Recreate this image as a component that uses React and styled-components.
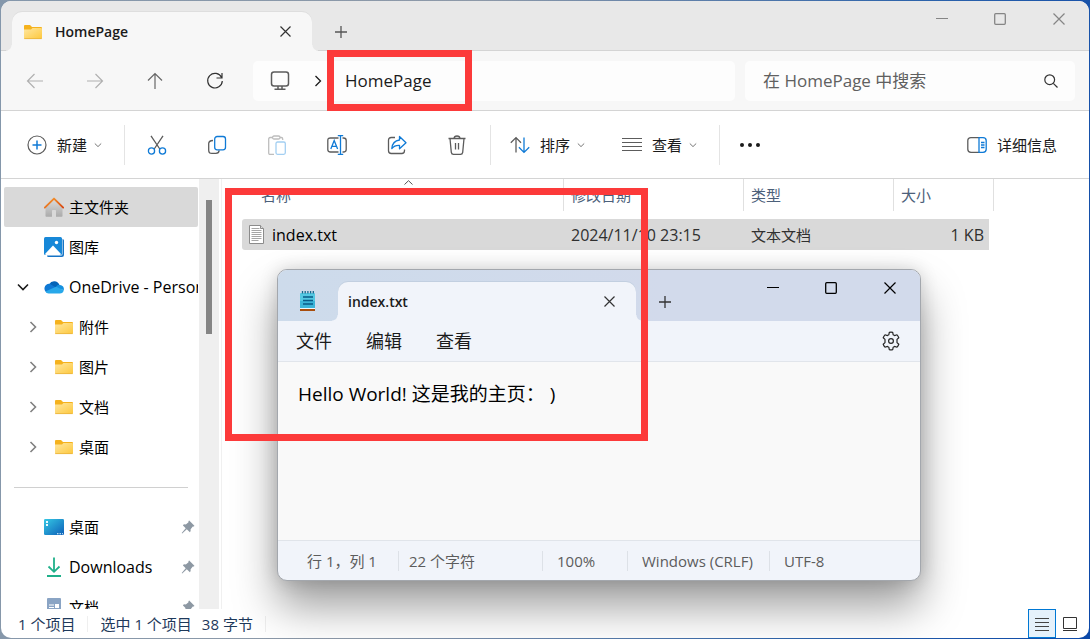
import React from "react";
import styled, { createGlobalStyle } from "styled-components";

const GlobalStyle = createGlobalStyle`
  *, *::before, *::after { box-sizing: border-box; }
  body { margin: 0; }
  body, button, input, textarea, table {
    font-family: "Open Sans", "Noto Sans CJK SC", sans-serif;
    font-size: 15px;
    line-height: 20px;
    color: #1b1b1b;
  }
  button { border: 0; padding: 0; background: none; }
  svg { display: block; flex: none; }
`;

const Desktop = styled.div`
  position: relative;
  display: flex;
  min-height: 100vh;
  padding: 1px;
  overflow: hidden;
  background: linear-gradient(100deg, #8497ab 0%, #8d99a8 40%, #2f65ab 75%, #0b48a8 100%);
`;

const Explorer = styled.main`
  flex: 1;
  min-width: 0;
  display: flex;
  flex-direction: column;
  border-radius: 10px;
  overflow: hidden;
  background: #fff;
`;

/* ---------- title bar ---------- */

const TitleBar = styled.header`
  display: flex;
  height: 50px;
  flex: none;
  background: #e8e8e8;
  box-shadow: inset 0 -1px #d4d4d4;
`;

const Tab = styled.div`
  position: relative;
  display: flex;
  align-items: center;
  align-self: flex-end;
  gap: 12px;
  width: ${(p) => p.$width}px;
  height: 39px;
  margin-left: ${(p) => p.$indent}px;
  padding: 0 12px 0 ${(p) => p.$start}px;
  border-radius: 10px 10px 0 0;
  background: ${(p) => p.$bg};
  box-shadow: 0 -1px ${(p) => p.$edge};

  &::before, &::after {
    content: "";
    position: absolute;
    bottom: 0;
    width: 6px;
    height: 6px;
  }
  &::before {
    left: -6px;
    background: radial-gradient(circle at 0 0, transparent 5px, ${(p) => p.$bg} 6px);
  }
  &::after {
    right: -6px;
    background: radial-gradient(circle at 100% 0, transparent 5px, ${(p) => p.$bg} 6px);
  }
`;

const TabTitle = styled.span`
  flex: 1;
  white-space: nowrap;
  font-size: 14px;
  font-weight: 600;
`;

const IconButton = styled.button`
  display: flex;
  flex: none;
  align-items: center;
  justify-content: center;
  width: ${(p) => p.$w || 30}px;
  height: ${(p) => p.$h || 30}px;
  color: ${(p) => p.$color || "#333"};
`;

const NewTab = styled(IconButton)`
  align-self: flex-end;
  margin: 0 0 4px 14px;
`;

const Captions = styled.div`
  display: flex;
  margin-left: auto;
`;

/* ---------- navigation row ---------- */

const NavBar = styled.nav`
  display: flex;
  align-items: center;
  flex: none;
  height: 60px;
  padding: 0 14px 0 19px;
  border-bottom: 1px solid #d4d4d4;
  background: #f7f7f7;
`;

const NavButtons = styled.div`
  display: flex;
  gap: 30px;
  margin-right: 23px;
`;

const AddressBar = styled.div`
  display: flex;
  align-items: center;
  flex: 1;
  min-width: 0;
  height: 40px;
  padding-left: 12px;
  border-radius: 5px;
  background: #fdfdfd;
`;

const Crumb = styled.button`
  margin-left: 4px;
  font-size: 17px;
  line-height: 24px;
`;

const SearchBox = styled.label`
  display: flex;
  align-items: center;
  flex: none;
  width: 330px;
  height: 40px;
  margin-left: 10px;
  padding: 0 17px 0 18px;
  border-radius: 5px;
  background: #fdfdfd;
`;

const SearchInput = styled.input`
  flex: 1;
  min-width: 0;
  padding: 0;
  border: 0;
  outline: 0;
  background: transparent;
  font-size: 17px;
  line-height: 24px;
  &::placeholder { color: #606060; opacity: 1; }
`;

/* ---------- command bar ---------- */

const CommandBar = styled.div`
  display: flex;
  align-items: center;
  flex: none;
  height: 68px;
  padding: 0 32px 0 26px;
  border-bottom: 1px solid #d4d4d4;
`;

const Command = styled.button`
  display: flex;
  align-items: center;
  white-space: nowrap;
`;

const CommandLabel = styled.span`
  margin-left: 10px;
  svg + & { margin-left: 10px; }
  & + svg { margin-left: 7px; }
`;

const Rule = styled.span`
  flex: none;
  width: 1px;
  height: ${(p) => p.$h}px;
  background: ${(p) => p.$tone || "#e4e4e4"};
`;

const CommandRule = styled(Rule)`
  margin-left: 22px;
`;

const Tools = styled.div`
  display: flex;
  gap: 38px;
  margin-left: 21px;
`;

const ViewCommands = styled.div`
  display: flex;
  gap: 37px;
  margin-left: 19px;
`;

const Details = styled(Command)`
  margin-left: auto;
`;

/* ---------- body ---------- */

const Body = styled.div`
  display: flex;
  flex: 1 1 0;
  min-height: 430px;
`;

const Sidebar = styled.aside`
  flex: none;
  width: 198px;
  height: 430px;
  padding: 8px 1px 0 3px;
  overflow: hidden;
`;

const Place = styled.button`
  display: flex;
  align-items: center;
  width: 100%;
  height: 40px;
  padding-left: ${(p) => (p.$nested ? 20 : 10)}px;
  padding-right: 3px;
  overflow: hidden;
  border-radius: 2px;
  background: ${(p) => (p.$active ? "#d9d9d9" : "transparent")};
  color: #000;
  text-align: left;
`;

const Toggle = styled.span`
  display: flex;
  justify-content: center;
  flex: none;
  width: 18px;
  margin-right: 12px;
`;

const PlaceIcon = styled.span`
  display: flex;
  justify-content: center;
  flex: none;
  width: 20px;
`;

const PlaceName = styled.span`
  flex: 1;
  margin-left: 5px;
  white-space: nowrap;
  font-size: ${(p) => (p.$latin ? 16 : 15)}px;
`;

const Divider = styled.hr`
  height: 1px;
  margin: 20px 10px 19px;
  border: 0;
  background: #d0d0d0;
`;

const ScrollTrack = styled.div`
  flex: none;
  width: 20px;
  padding: 21px 7px 0 7px;
  background: #efefef;
`;

const ScrollThumb = styled.div`
  height: 134px;
  background: #858585;
`;

const Files = styled.section`
  flex: 1;
  min-width: 0;
  margin-left: 2px;
  padding-left: 20px;
  border-left: 1px solid #f0f0f0;
`;

const FileTable = styled.table`
  width: 752px;
  table-layout: fixed;
  border-spacing: 0;
  tbody::before { content: ""; display: block; height: 8px; }
`;

const Head = styled.th`
  position: relative;
  width: ${(p) => p.$w}px;
  height: 32px;
  padding: 0 0 0 ${(p) => p.$pad || 7}px;
  border-right: 1px solid #e0e0e0;
  color: #4c607a;
  font-weight: 400;
  text-align: left;
`;

const SortMark = styled.span`
  position: absolute;
  top: 1px;
  left: 162px;
`;

const Cell = styled.td`
  height: 31px;
  padding: 0 5px 0 7px;
  background: #d9d9d9;
  background-clip: padding-box;
  color: #303030;
  white-space: nowrap;
  font-size: ${(p) => (p.$latin ? 16 : 15)}px;
  text-align: ${(p) => p.$align || "left"};
  &:first-child { border-radius: 3px 0 0 3px; }
  &:last-child { border-right: 5px solid transparent; }
`;

const FileName = styled.span`
  display: flex;
  align-items: center;
  gap: 8px;
  color: #000;
`;

const StatusBar = styled.footer`
  display: flex;
  align-items: center;
  flex: none;
  gap: 12px;
  height: 29px;
  padding: 0 6px 0 17px;
  color: #1e395b;
  white-space: nowrap;
`;

const Selection = styled.span`
  display: flex;
  gap: 10px;
`;

const ViewModes = styled.div`
  display: flex;
  gap: 1px;
  margin-left: auto;
`;

const ModeButton = styled(IconButton)`
  border: ${(p) => (p.$on ? "1px solid #0078d4" : "0")};
  background: ${(p) => (p.$on ? "#e5f1fb" : "none")};
`;

/* ---------- notepad window ---------- */

const Notepad = styled.section`
  position: absolute;
  top: 269px;
  left: 277px;
  width: 644px;
  display: flex;
  flex-direction: column;
  border: 1px solid #a3a7ad;
  border-radius: 10px;
  overflow: hidden;
  background: #f1f4fa;
  box-shadow: 0 26px 44px rgba(0, 0, 0, 0.38), 0 0 18px rgba(0, 0, 0, 0.16);
`;

const NotepadTitle = styled.header`
  display: flex;
  height: 51px;
  background: linear-gradient(90deg, #cddbeb, #d2daeb 60%);
`;

const AppIcon = styled.span`
  margin: 20px 0 0 21px;
`;

const MenuBar = styled.div`
  display: flex;
  align-items: center;
  height: 41px;
  padding: 0 14px 0 18px;
  gap: 34px;
  border-bottom: 1px solid #e1e5eb;
`;

const MenuItem = styled.button`
  font-size: 18px;
  line-height: 24px;
`;

const Settings = styled(IconButton)`
  margin-left: auto;
`;

const Editor = styled.textarea`
  display: block;
  height: 178px;
  padding: 20px;
  border: 0;
  outline: 0;
  resize: none;
  background: #f9f9f9;
  color: #000;
  font-size: 19px;
  line-height: 24px;
  text-spacing-trim: space-all;
`;

const NotepadStatus = styled.footer`
  display: grid;
  grid-template-columns: 121px 144px 85px 142px 1fr;
  align-items: center;
  height: 40px;
  border-top: 1px solid #e0e4ea;
  color: #5c5c5c;
  white-space: nowrap;
`;

const StatusCell = styled.span`
  padding-left: ${(p) => p.$pad}px;
  border-right: 1px solid #dde1e7;
  &:last-child { border-right: 0; }
`;

const Highlight = styled.div`
  position: absolute;
  top: ${(p) => p.$top}px;
  left: ${(p) => p.$left}px;
  width: ${(p) => p.$w}px;
  height: ${(p) => p.$h}px;
  border: 7px solid #fc3a3a;
  pointer-events: none;
`;

/* ---------- icons ---------- */

const Line = ({ w = 20, h = w, sw = 1.2, color = "currentColor", children }) => (
  <svg width={w} height={h} viewBox={`0 0 ${w} ${h}`} fill="none" stroke={color} strokeWidth={sw} aria-hidden="true">
    {children}
  </svg>
);

const CloseIcon = ({ s = 12 }) => (
  <Line w={s}><path d={`M.5 .5 ${s - 0.5} ${s - 0.5}M${s - 0.5} .5 .5 ${s - 0.5}`} /></Line>
);
const PlusIcon = () => <Line w={12} sw={1.3}><path d="M6 0v12M0 6h12" /></Line>;
const MinIcon = () => <Line w={12}><path d="M0 5.5h12" /></Line>;
const MaxIcon = () => <Line w={12} sw={1.3}><rect x=".7" y=".7" width="10.6" height="10.6" rx="1" /></Line>;
const Chevron = ({ dir = "right", color = "#808080", sw = 1.6 }) => (
  <Line w={12} color={color} sw={sw}>
    <path d={dir === "right" ? "M3.5 1 8.5 6 3.5 11" : "M1 3.5 6 8.5 11 3.5"} />
  </Line>
);
const SmallDown = () => <Line w={8} color="#777" sw={1}><path d="M.8 2.5 4 5.6 7.2 2.5" /></Line>;

const Folder = () => (
  <svg width="20" height="16" viewBox="0 0 20 16" aria-hidden="true">
    <defs>
      <linearGradient id="folder" x1="0" y1="0" x2="1" y2="1">
        <stop offset="0" stopColor="#ffe7a1" /><stop offset="1" stopColor="#fdc83d" />
      </linearGradient>
    </defs>
    <path d="M1 2q0-1 1-1h5l2 2h9q1 0 1 1v4H1z" fill="#f5b21d" />
    <path d="M1 5.500h7l1.500-1.500H18q1 0 1 1V14q0 .8-1 .8H2q-1 0-1-.8z" fill="url(#folder)" />
    <path d="M1.200 14.600h17.600" stroke="#e8ae2c" strokeWidth=".8" />
  </svg>
);

const HomeIcon = () => (
  <svg width="20" height="20" viewBox="0 0 20 20" aria-hidden="true">
    <defs>
      <linearGradient id="wall" x1="0" y1="0" x2="0" y2="1">
        <stop offset="0" stopColor="#dedede" /><stop offset="1" stopColor="#aaa" />
      </linearGradient>
      <linearGradient id="roof" x1="0" y1="0" x2="1" y2="1">
        <stop offset="0" stopColor="#f8a032" /><stop offset="1" stopColor="#d84a15" />
      </linearGradient>
    </defs>
    <path d="M1.500 9 10 1.500 18.500 9v10q0 .8-.8.8H12v-6q0-.8-.8-.8H8.800q-.8 0-.8.8v6H2.300q-.8 0-.8-.8z" fill="url(#wall)" />
    <path d="M.8 10.600 10 1.600l9.200 9" fill="none" stroke="url(#roof)" strokeWidth="1.900" strokeLinejoin="round" strokeLinecap="round" />
  </svg>
);

const GalleryIcon = () => (
  <svg width="20" height="20" viewBox="0 0 20 20" aria-hidden="true">
    <path d="M3 18.500h14q1.500 0 1.500-1.500V2q1.500 0 1.500 1.500V18q0 2-2 2H4.500Q3 20 3 18.500z" fill="#1674c5" />
    <rect width="18" height="18" rx="1.500" fill="#1788d8" />
    <path d="M1 17 9 8.500l8 8.500q-.4 1-1.500 1h-13Q1.400 18 1 17z" fill="#fff" />
    <circle cx="12.500" cy="5.500" r="1.700" fill="#fff" />
  </svg>
);

const CloudIcon = () => (
  <svg width="20" height="14" viewBox="0 0 20 14" aria-hidden="true">
    <path d="M5.200 4.200A5.600 5.600 0 0 1 15.300 4.800L11 9 3 5z" fill="#0364b8" />
    <path d="M5.800 3.800 13.500 8.500 9 13H4.400A4.500 4.500 0 0 1 5.800 3.800z" fill="#0f78d4" />
    <path d="M12 6.500q1.600-2 4-1.600A4.200 4.200 0 0 1 19.800 10L13 9z" fill="#1490df" />
    <path d="M1.300 11.600 12 6.700l7.800 3.600Q19 13.500 15.800 13.500H4.600Q2.400 13.400 1.300 11.600z" fill="#28a8ea" />
  </svg>
);

const DesktopIcon = () => (
  <svg width="20" height="16" viewBox="0 0 20 16" aria-hidden="true">
    <defs>
      <linearGradient id="desk" x1="0" y1="0" x2="1" y2="1">
        <stop offset="0" stopColor="#35c8e4" /><stop offset="1" stopColor="#0d5fb8" />
      </linearGradient>
    </defs>
    <rect width="20" height="16" rx="1.200" fill="url(#desk)" />
    <path d="M2 2h2v2H2zM2 5h2v2H2zM13 14.300h1.500v1H13zM15.500 14.300H17v1h-1.500zM18 14.300h1v1h-1z" fill="#e9fbff" />
  </svg>
);

const DownloadIcon = () => (
  <Line w={16} h={20} color="#1fb08a" sw={1.8}>
    <path d="M8 .5v14M2.500 9.500 8 14.800l5.500-5.300M1 19h14" />
  </Line>
);

const DocumentIcon = () => (
  <svg width="14" height="18" viewBox="0 0 14 18" aria-hidden="true">
    <rect width="14" height="18" rx="1" fill="#8aa4c4" />
    <path d="M2 6.500h5v1H2zM2 9h5v1H2zM8 6h4v4H8zM2 12h10v1H2z" fill="#fff" />
  </svg>
);

const PinIcon = () => (
  <svg width="14" height="14" viewBox="0 0 14 14" aria-hidden="true">
    <path d="M8.200.6 13.400 5.700Q13.200 6.700 11.800 6.600L9.600 9.300Q10 11.300 8.900 12.300L5.800 9.300 1.200 13.400.7 12.900 4.700 8.200 1.800 5.300Q2.700 4 4.800 4.400L7.500 2.200Q7.200.9 8.200.6z" fill="#8d98a3" />
  </svg>
);

const TextFileIcon = () => (
  <svg width="15" height="19" viewBox="0 0 15 19" aria-hidden="true">
    <path d="M.5.5h11l3 3v15H.5z" fill="#fff" stroke="#8b8b8b" />
    <path d="M11.500.5v3h3" fill="#ddd" stroke="#8b8b8b" />
    <path d="M2.500 3.500h8M2.500 5.500h10M2.500 7.500h10M2.500 9.500h10M2.500 11.500h10M2.500 13.500h10M2.500 15.500h7" stroke="#9b9b9b" strokeWidth=".9" />
  </svg>
);

const NotepadIcon = () => (
  <svg width="18" height="22" viewBox="0 0 18 22" aria-hidden="true">
    <rect x="1" y="3" width="15" height="15" rx="1" fill="#55c8e2" />
    <path d="M1 11h15v7H1z" fill="#3bb4d8" />
    <path d="M3.500 1v2.500M6.200 1v2.500M8.900 1v2.500M11.600 1v2.500M14.300 1v2.500" stroke="#16678c" strokeWidth="1.300" />
    <path d="M4 7h10M4 10.500h10M4 14h10" stroke="#075a87" strokeWidth="1.500" />
    <path d="M1 19h15v2H1z" fill="#a84e0e" /><path d="M1 18h15v1H1z" fill="#eef7fb" />
  </svg>
);

const blue = "#0f7ad6";
const grey = "#5c5c5c";

const icons = {
  back: <Line w={18} color="#b0b0b0"><path d="M17 9H2M8.500 2 1.500 9l7 7" /></Line>,
  forward: <Line w={18} color="#b0b0b0"><path d="M1 9h15M9.500 2l7 7-7 7" /></Line>,
  up: <Line w={18} color="#666"><path d="M9 17V2M2 8.500 9 1.500l7 7" /></Line>,
  refresh: <Line w={18} color="#333"><path d="M15.600 5.500A7.300 7.300 0 1 0 16.300 9M16 1v5h-5.500" /></Line>,
  pc: (
    <Line w={20} color={grey} sw={1.5}>
      <rect x="1.500" y="1" width="17" height="14" rx="2.500" />
      <path d="M8 15v3M12 15v3M4.500 18.300h11" />
    </Line>
  ),
  search: <Line w={14} color="#333"><circle cx="5.700" cy="5.700" r="4.900" /><path d="m9.300 9.300 4.200 4.200" /></Line>,
  cut: (
    <Line w={20} color={grey} sw={1.3}>
      <path d="M4 .8 12.800 14M16 .8 7.200 14" />
      <g stroke={blue}><circle cx="4.500" cy="16" r="3.100" /><circle cx="15.500" cy="16" r="3.100" /></g>
    </Line>
  ),
  copy: (
    <Line w={20} color={blue} sw={1.3}>
      <path d="M6 5.500Q1.700 5.700 1.700 8.500v6.700q0 3.200 3.200 3.200h4q3 0 3.300-3" stroke={grey} />
      <rect x="7.700" y="1.500" width="10.800" height="13.300" rx="2.500" />
    </Line>
  ),
  paste: (
    <Line w={20} color="#bdbdbd" sw={1.3}>
      <path d="M5 2.500H3.200Q1.700 2.500 1.700 4v14q0 1.500 1.500 1.500H7M13 2.500h1.300q1.400 0 1.400 1.500v1" />
      <rect x="5.500" y="1" width="7.500" height="3" rx="1.500" />
      <rect x="9" y="7" width="9.300" height="12.300" rx="1.500" stroke="#a3cff2" />
    </Line>
  ),
  rename: (
    <Line w={20} color={grey} sw={1.3}>
      <path d="M11.500 3H3.500Q.8 3 .8 5.500v9q0 2.500 2.700 2.500h8M15.500 3h1Q19.200 3 19.200 5.500v9q0 2.500-2.700 2.500h-1" />
      <path d="M13.500.7v18.600M10.800.7h5.400M10.800 19.300h5.400M3.800 14 7.200 5.500 10.600 14M5 11.300h4.400" stroke={blue} />
    </Line>
  ),
  share: (
    <Line w={20} color={grey} sw={1.3}>
      <path d="M8 2.500H4.300Q1.500 2.500 1.500 5.200v10.500q0 2.800 2.800 2.800h10.500q2.700 0 2.700-2.800V14.500" />
      <path d="M12.500 1.500 19 7.700l-6.500 6v-3.400Q7.500 10 4.800 13.500 5.500 6 12.500 5z" stroke={blue} strokeLinejoin="round" />
    </Line>
  ),
  trash: (
    <Line w={20} color={grey} sw={1.3}>
      <path d="M1.500 3.500h17M7 3.300Q7.200 1 10 1t3 2.300M3 3.500 4.300 17.300Q4.600 19.300 6.500 19.300h7q1.900 0 2.200-2L17 3.500M8.500 8v6.500M11.500 8v6.500" />
    </Line>
  ),
  add: <Line w={20}><circle cx="10" cy="10" r="9" stroke={grey} /><path d="M10 5.500v9M5.500 10h9" stroke={blue} strokeWidth="1.500" /></Line>,
  sort: (
    <Line w={20} color={grey} sw={1.3}>
      <path d="M6 17.500V3M.8 7.800 6 2.600l5 5.200" /><path d="M14 2.500V17M8.900 12.300 14 17.400l5.200-5.100" stroke={blue} />
    </Line>
  ),
  view: <Line w={20} color={grey}><path d="M0 3.500h20M0 7.500h20M0 11.500h20M0 15.500h20" /></Line>,
  more: (
    <svg width="22" height="4" viewBox="0 0 22 4" fill="#1b1b1b" aria-hidden="true">
      <circle cx="3" cy="2" r="2" /><circle cx="11" cy="2" r="2" /><circle cx="19" cy="2" r="2" />
    </svg>
  ),
  details: (
    <Line w={20} color={grey} sw={1.3}>
      <path d="M12 2.700H4Q.8 2.700.8 5.700v8.600q0 3 3.200 3h8" />
      <path d="M12 2.700h4q3.200 0 3.200 3v8.600q0 3-3.200 3h-4zM14 7.500h3.500M14 10h3.500M14 12.500h3.500" stroke={blue} />
    </Line>
  ),
  gear: (
    <Line w={20} color="#262626">
      <circle cx="10" cy="10" r="2.400" />
      <path strokeLinejoin="round" d="M8.300 1.400Q10 1 11.700 1.400L12.200 3.800 13.600 4.600 16 3.800Q17.200 5 17.800 6.700L16 8.400V11.600L17.800 13.300Q17.200 15 16 16.200L13.600 15.400 12.200 16.200 11.700 18.600Q10 19 8.300 18.600L7.800 16.200 6.400 15.400 4 16.200Q2.800 15 2.200 13.300L4 11.600V8.400L2.200 6.700Q2.800 5 4 3.800L6.400 4.600 7.800 3.800z" />
    </Line>
  ),
  listMode: <Line w={14} color="#444" sw={1}><path d="M0 1.500h14M0 5.500h14M0 9.500h14M0 13.500h14" /></Line>,
  thumbMode: <Line w={14} color="#333" sw={1}><path d="M.5.5h13v11H.5zM0 13.500h14" /></Line>,
};

const drivePlaces = ["附件", "图片", "文档", "桌面"];
const pinnedPlaces = [
  { name: "桌面", icon: <DesktopIcon /> },
  { name: "Downloads", icon: <DownloadIcon />, latin: true },
  { name: "文档", icon: <DocumentIcon /> },
];
const tools = [
  ["cut", "剪切"],
  ["copy", "复制"],
  ["paste", "粘贴"],
  ["rename", "重命名"],
  ["share", "共享"],
  ["trash", "删除"],
];

const WindowButtons = ({ color }) => (
  <Captions>
    <IconButton $w={58} $h={36} $color={color} aria-label="最小化"><MinIcon /></IconButton>
    <IconButton $w={58} $h={36} $color={color} aria-label="最大化"><MaxIcon /></IconButton>
    <IconButton $w={60} $h={36} $color={color} aria-label="关闭"><CloseIcon /></IconButton>
  </Captions>
);

export default function App() {
  return (
    <Desktop>
      <GlobalStyle />
      <Explorer>
        <TitleBar>
          <Tab $width={300} $indent={11} $start={11} $bg="#f7f7f7" $edge="#dedede">
            <PlaceIcon><Folder /></PlaceIcon>
            <TabTitle>HomePage</TabTitle>
            <IconButton aria-label="关闭标签页"><CloseIcon s={11} /></IconButton>
          </Tab>
          <NewTab $color="#555" aria-label="新标签页"><PlusIcon /></NewTab>
          <WindowButtons color="#858585" />
        </TitleBar>

        <NavBar>
          <NavButtons>
            <IconButton aria-label="后退">{icons.back}</IconButton>
            <IconButton aria-label="前进">{icons.forward}</IconButton>
            <IconButton aria-label="向上">{icons.up}</IconButton>
            <IconButton aria-label="刷新">{icons.refresh}</IconButton>
          </NavButtons>
          <AddressBar>
            <IconButton aria-label="此电脑">{icons.pc}</IconButton>
            <IconButton $w={46} aria-label="展开"><Chevron color="#1b1b1b" sw={1.3} /></IconButton>
            <Crumb>HomePage</Crumb>
          </AddressBar>
          <SearchBox>
            <SearchInput type="search" placeholder="在 HomePage 中搜索" aria-label="在 HomePage 中搜索" />
            {icons.search}
          </SearchBox>
        </NavBar>

        <CommandBar>
          <Command>{icons.add}<CommandLabel>新建</CommandLabel><SmallDown /></Command>
          <CommandRule $h={40} />
          <Tools>
            {tools.map(([id, label]) => (
              <IconButton key={id} $w={22} $h={40} aria-label={label}>{icons[id]}</IconButton>
            ))}
          </Tools>
          <CommandRule $h={40} />
          <ViewCommands>
            <Command>{icons.sort}<CommandLabel>排序</CommandLabel><SmallDown /></Command>
            <Command>{icons.view}<CommandLabel>查看</CommandLabel><SmallDown /></Command>
          </ViewCommands>
          <CommandRule $h={40} />
          <IconButton $w={60} $h={40} aria-label="更多">{icons.more}</IconButton>
          <Details>{icons.details}<CommandLabel>详细信息</CommandLabel></Details>
        </CommandBar>

        <Body>
          <Sidebar>
            <Place $active><Toggle /><PlaceIcon><HomeIcon /></PlaceIcon><PlaceName>主文件夹</PlaceName></Place>
            <Place><Toggle /><PlaceIcon><GalleryIcon /></PlaceIcon><PlaceName>图库</PlaceName></Place>
            <Place>
              <Toggle><Chevron dir="down" color="#1b1b1b" /></Toggle>
              <PlaceIcon><CloudIcon /></PlaceIcon>
              <PlaceName $latin>OneDrive - Personal</PlaceName>
            </Place>
            {drivePlaces.map((name) => (
              <Place key={name} $nested>
                <Toggle><Chevron /></Toggle><PlaceIcon><Folder /></PlaceIcon><PlaceName>{name}</PlaceName>
              </Place>
            ))}
            <Divider />
            {pinnedPlaces.map(({ name, icon, latin }) => (
              <Place key={name}>
                <Toggle /><PlaceIcon>{icon}</PlaceIcon><PlaceName $latin={latin}>{name}</PlaceName><PinIcon />
              </Place>
            ))}
          </Sidebar>
          <ScrollTrack><ScrollThumb /></ScrollTrack>
          <Files>
            <FileTable>
              <thead>
                <tr>
                  <Head $w={322} $pad={19}>
                    名称
                    <SortMark><Line w={9} h={5} color="#555" sw={1}><path d="M.5 4.500 4.500 .7l4 3.800" /></Line></SortMark>
                  </Head>
                  <Head $w={180}>修改日期</Head>
                  <Head $w={150}>类型</Head>
                  <Head $w={100}>大小</Head>
                </tr>
              </thead>
              <tbody>
                <tr>
                  <Cell $latin><FileName><TextFileIcon />index.txt</FileName></Cell>
                  <Cell $latin>2024/11/10 23:15</Cell>
                  <Cell>文本文档</Cell>
                  <Cell $latin $align="right">1 KB</Cell>
                </tr>
              </tbody>
            </FileTable>
          </Files>
        </Body>

        <StatusBar>
          <span>1 个项目</span>
          <Rule $h={16} $tone="#efefef" />
          <Selection><span>选中 1 个项目</span><span>38 字节</span></Selection>
          <Rule $h={16} $tone="#efefef" />
          <ViewModes>
            <ModeButton $on $w={28} $h={29} aria-label="详细信息视图">{icons.listMode}</ModeButton>
            <ModeButton $w={26} $h={29} aria-label="大图标视图">{icons.thumbMode}</ModeButton>
          </ViewModes>
        </StatusBar>
      </Explorer>

      <Notepad>
        <NotepadTitle>
          <AppIcon><NotepadIcon /></AppIcon>
          <Tab $width={298} $indent={21} $start={10} $bg="#f1f4fa" $edge="#c2cfe0">
            <TabTitle>index.txt</TabTitle>
            <IconButton aria-label="关闭标签页"><CloseIcon s={11} /></IconButton>
          </Tab>
          <NewTab aria-label="新标签页"><PlusIcon /></NewTab>
          <WindowButtons color="#000" />
        </NotepadTitle>
        <MenuBar>
          <MenuItem>文件</MenuItem>
          <MenuItem>编辑</MenuItem>
          <MenuItem>查看</MenuItem>
          <Settings aria-label="设置">{icons.gear}</Settings>
        </MenuBar>
        <Editor aria-label="文本编辑器" defaultValue="Hello World! 这是我的主页： )" spellCheck={false} />
        <NotepadStatus>
          <StatusCell $pad={29}>行 1，列 1</StatusCell>
          <StatusCell $pad={10}>22 个字符</StatusCell>
          <StatusCell $pad={14}>100%</StatusCell>
          <StatusCell $pad={14}>Windows (CRLF)</StatusCell>
          <StatusCell $pad={14}>UTF-8</StatusCell>
        </NotepadStatus>
      </Notepad>

      <Highlight $top={50} $left={327} $w={145} $h={61} />
      <Highlight $top={188} $left={225} $w={423} $h={253} />
    </Desktop>
  );
}
